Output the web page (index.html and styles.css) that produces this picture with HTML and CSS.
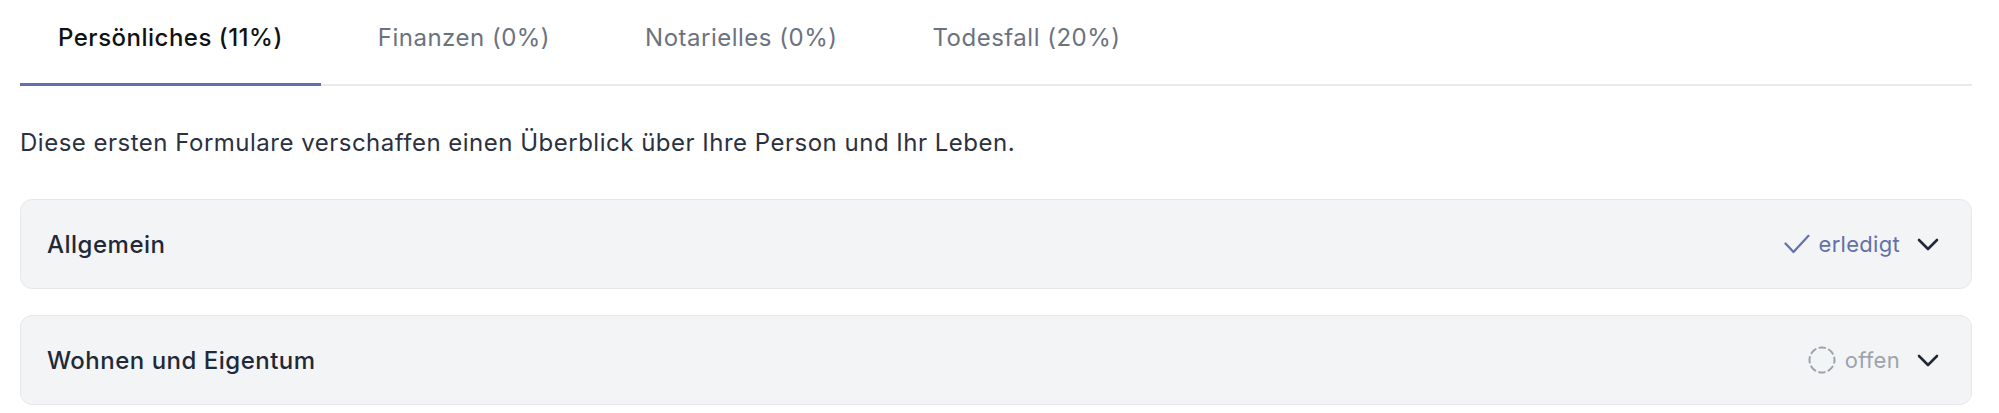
FILE: index.html
```html
<!DOCTYPE html>
<html lang="de">
<head>
<meta charset="utf-8">
<title>Formulare</title>
<link rel="stylesheet" href="styles.css">
</head>
<body>
<div class="page">
  <nav class="tabs">
    <a class="tab active">Persönliches (11%)</a>
    <a class="tab">Finanzen (0%)</a>
    <a class="tab">Notarielles (0%)</a>
    <a class="tab">Todesfall (20%)</a>
  </nav>
  <p class="intro">Diese ersten Formulare verschaffen einen Überblick über Ihre Person und Ihr Leben.</p>
  <div class="cards">
    <div class="card">
      <span class="card-title">Allgemein</span>
      <div class="card-right">
        <span class="status done">
          <svg class="status-icon" width="26" height="20" viewBox="0 0 26 20" fill="none" stroke="currentColor" stroke-width="2.2" stroke-linecap="round" stroke-linejoin="round"><path d="M1.5 9.5 L9.5 18 L24.5 1.8"/></svg>
          erledigt
        </span>
        <svg class="chevron" width="22" height="13" viewBox="0 0 22 13" fill="none" stroke="currentColor" stroke-width="2.6" stroke-linecap="round" stroke-linejoin="round"><path d="M2 2 L11 11 L20 2"/></svg>
      </div>
    </div>
    <div class="card">
      <span class="card-title">Wohnen und Eigentum</span>
      <div class="card-right">
        <span class="status open">
          <svg class="status-icon" width="28" height="28" viewBox="0 0 28 28" fill="none" stroke="currentColor" stroke-width="2" stroke-linecap="round"><circle cx="14" cy="14" r="12.5" stroke-dasharray="5.8 4" stroke-dashoffset="2.9"/></svg>
          offen
        </span>
        <svg class="chevron" width="22" height="13" viewBox="0 0 22 13" fill="none" stroke="currentColor" stroke-width="2.6" stroke-linecap="round" stroke-linejoin="round"><path d="M2 2 L11 11 L20 2"/></svg>
      </div>
    </div>
  </div>
</div>
</body>
</html>
```

FILE: styles.css
```css
* { box-sizing: border-box; }
html, body { margin: 0; padding: 0; background: #ffffff; }
body {
  font-family: Inter, "Noto Sans", "Liberation Sans", sans-serif;
  color: #1f2937;
  font-size: 24px;
  letter-spacing: 0.5px;
}
.page {
  padding: 0 27px 0 20px;
}
.tabs {
  display: flex;
  gap: 19px;
  height: 86px;
  border-bottom: 2px solid #e9eaed;
}
.tab {
  display: block;
  padding: 20px 38px 27px;
  line-height: 36px;
  font-size: 24px;
  font-weight: 400;
  color: #6b7280;
  border-bottom: 3px solid transparent;
  margin-bottom: -2px;
  height: 86px;
  white-space: nowrap;
}
.tab.active {
  color: #111111;
  font-weight: 500;
  border-bottom-color: #6470ae;
}
.intro {
  margin: 41px 0 0;
  font-size: 24px;
  line-height: 32px;
  color: #2b3140;
}
.cards {
  margin-top: 40px;
  display: flex;
  flex-direction: column;
  gap: 26px;
}
.card {
  height: 90px;
  display: flex;
  align-items: center;
  justify-content: space-between;
  padding: 0 32px 0 26px;
  background: #f3f4f6;
  border: 1px solid #e6e7ea;
  border-radius: 12px;
}
.card-title {
  font-size: 24px;
  font-weight: 500;
  color: #1f2937;
}
.card-right {
  display: flex;
  align-items: center;
  gap: 17px;
}
.status {
  display: flex;
  align-items: center;
  gap: 9px;
  font-size: 22px;
  letter-spacing: 0.3px;
}
.status.done { color: #6370aa; }
.status.open { color: #9ca3af; }
.chevron { color: #1f2937; display: block; }
.status-icon { display: block; }
```
